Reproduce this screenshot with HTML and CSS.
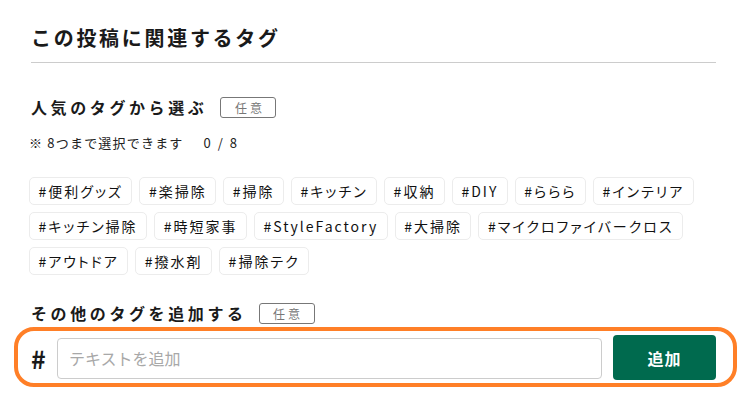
FILE: index.html
```html
<!DOCTYPE html>
<html lang="ja">
<head>
<meta charset="utf-8">
<link rel="stylesheet" href="styles.css">
</head>
<body>
<section class="panel">
  <h1 class="title">この投稿に関連するタグ</h1>

  <div class="sub-head first">
    <h2 class="sub-title">人気のタグから選ぶ</h2>
    <span class="badge">任意</span>
  </div>
  <p class="note">※ 8つまで選択できます<span class="count">0 / 8</span></p>

  <ul class="tags">
    <li class="tag">#便利グッズ</li>
    <li class="tag">#楽掃除</li>
    <li class="tag">#掃除</li>
    <li class="tag">#キッチン</li>
    <li class="tag">#収納</li>
    <li class="tag">#DIY</li>
    <li class="tag">#ららら</li>
    <li class="tag">#インテリア</li>
    <li class="tag">#キッチン掃除</li>
    <li class="tag">#時短家事</li>
    <li class="tag">#StyleFactory</li>
    <li class="tag">#大掃除</li>
    <li class="tag">#マイクロファイバークロス</li>
    <li class="tag">#アウトドア</li>
    <li class="tag">#撥水剤</li>
    <li class="tag">#掃除テク</li>
  </ul>

  <div class="sub-head second">
    <h2 class="sub-title">その他のタグを追加する</h2>
    <span class="badge">任意</span>
  </div>

  <div class="add-row">
    <span class="hash">#</span>
    <input class="add-input" type="text" placeholder="テキストを追加">
    <button class="add-btn" type="button">追加</button>
  </div>
</section>
</body>
</html>
```

FILE: styles.css
```css
* { box-sizing: border-box; }

html, body {
  margin: 0;
  padding: 0;
  background: #fff;
}

body {
  font-family: "Noto Sans CJK JP", "Noto Sans", sans-serif;
  color: #1a1a1a;
}

.panel {
  width: 685px;
  margin-left: 31px;
}

.title {
  margin: 23px 0 0;
  padding-bottom: 9px;
  font-size: 20px;
  line-height: 30px;
  font-weight: 700;
  letter-spacing: 2.7px;
  border-bottom: 1px solid #cccccc;
}

.sub-head {
  display: flex;
  align-items: center;
  height: 21px;
}

.sub-head.first { margin-top: 34px; }
.sub-head.second { margin-top: 28px; }

.sub-title {
  margin: 0;
  font-size: 16px;
  line-height: 21px;
  font-weight: 700;
  letter-spacing: 3.6px;
}

.badge {
  margin-left: 13px;
  width: 56px;
  height: 21px;
  border: 1px solid #777;
  border-radius: 3px;
  color: #777;
  font-size: 12px;
  line-height: 19px;
  text-align: center;
  letter-spacing: 3px;
  text-indent: 3px;
}

.second .badge { margin-left: 12px; }

.note {
  margin: 16px 0 0 -2px;
  font-size: 13px;
  line-height: 18px;
  letter-spacing: 1.2px;
  color: #222;
}

.count {
  margin-left: 20px;
  letter-spacing: 2px;
}

.tags {
  list-style: none;
  margin: 25px 0 0 -2px;
  padding: 0;
  display: flex;
  flex-wrap: wrap;
  gap: 7px;
  width: 700px;
}

.tag {
  height: 28px;
  padding: 0 8.5px;
  border: 1px solid #ececec;
  border-radius: 5px;
  font-size: 14px;
  line-height: 26px;
  letter-spacing: 2px;
  font-feature-settings: "palt";
  color: #111;
}

.add-row {
  display: flex;
  align-items: center;
  margin: 3px -21px 0 -17px;
  height: 60px;
  padding: 0 17px 0 13px;
  border: 4px solid #ff7f27;
  border-radius: 20px;
}

.hash {
  font-size: 25px;
  font-weight: 700;
  width: 13px;
  line-height: 30px;
  margin-top: 2px;
}

.add-input {
  margin-left: 13px;
  width: 545px;
  height: 41px;
  margin-top: 2px;
  border: 1px solid #cccccc;
  border-radius: 4px;
  padding: 0 11px;
  font-family: inherit;
  font-size: 16px;
  color: #222;
  outline: none;
}

.add-input::placeholder { color: #a8a8a8; }

.add-btn {
  margin-left: 11px;
  width: 103px;
  height: 45px;
  border: none;
  border-radius: 4px;
  background: #006a4e;
  color: #fff;
  font-family: inherit;
  font-size: 16px;
  font-weight: 700;
  letter-spacing: 1px;
  margin-top: 1px;
}
```
